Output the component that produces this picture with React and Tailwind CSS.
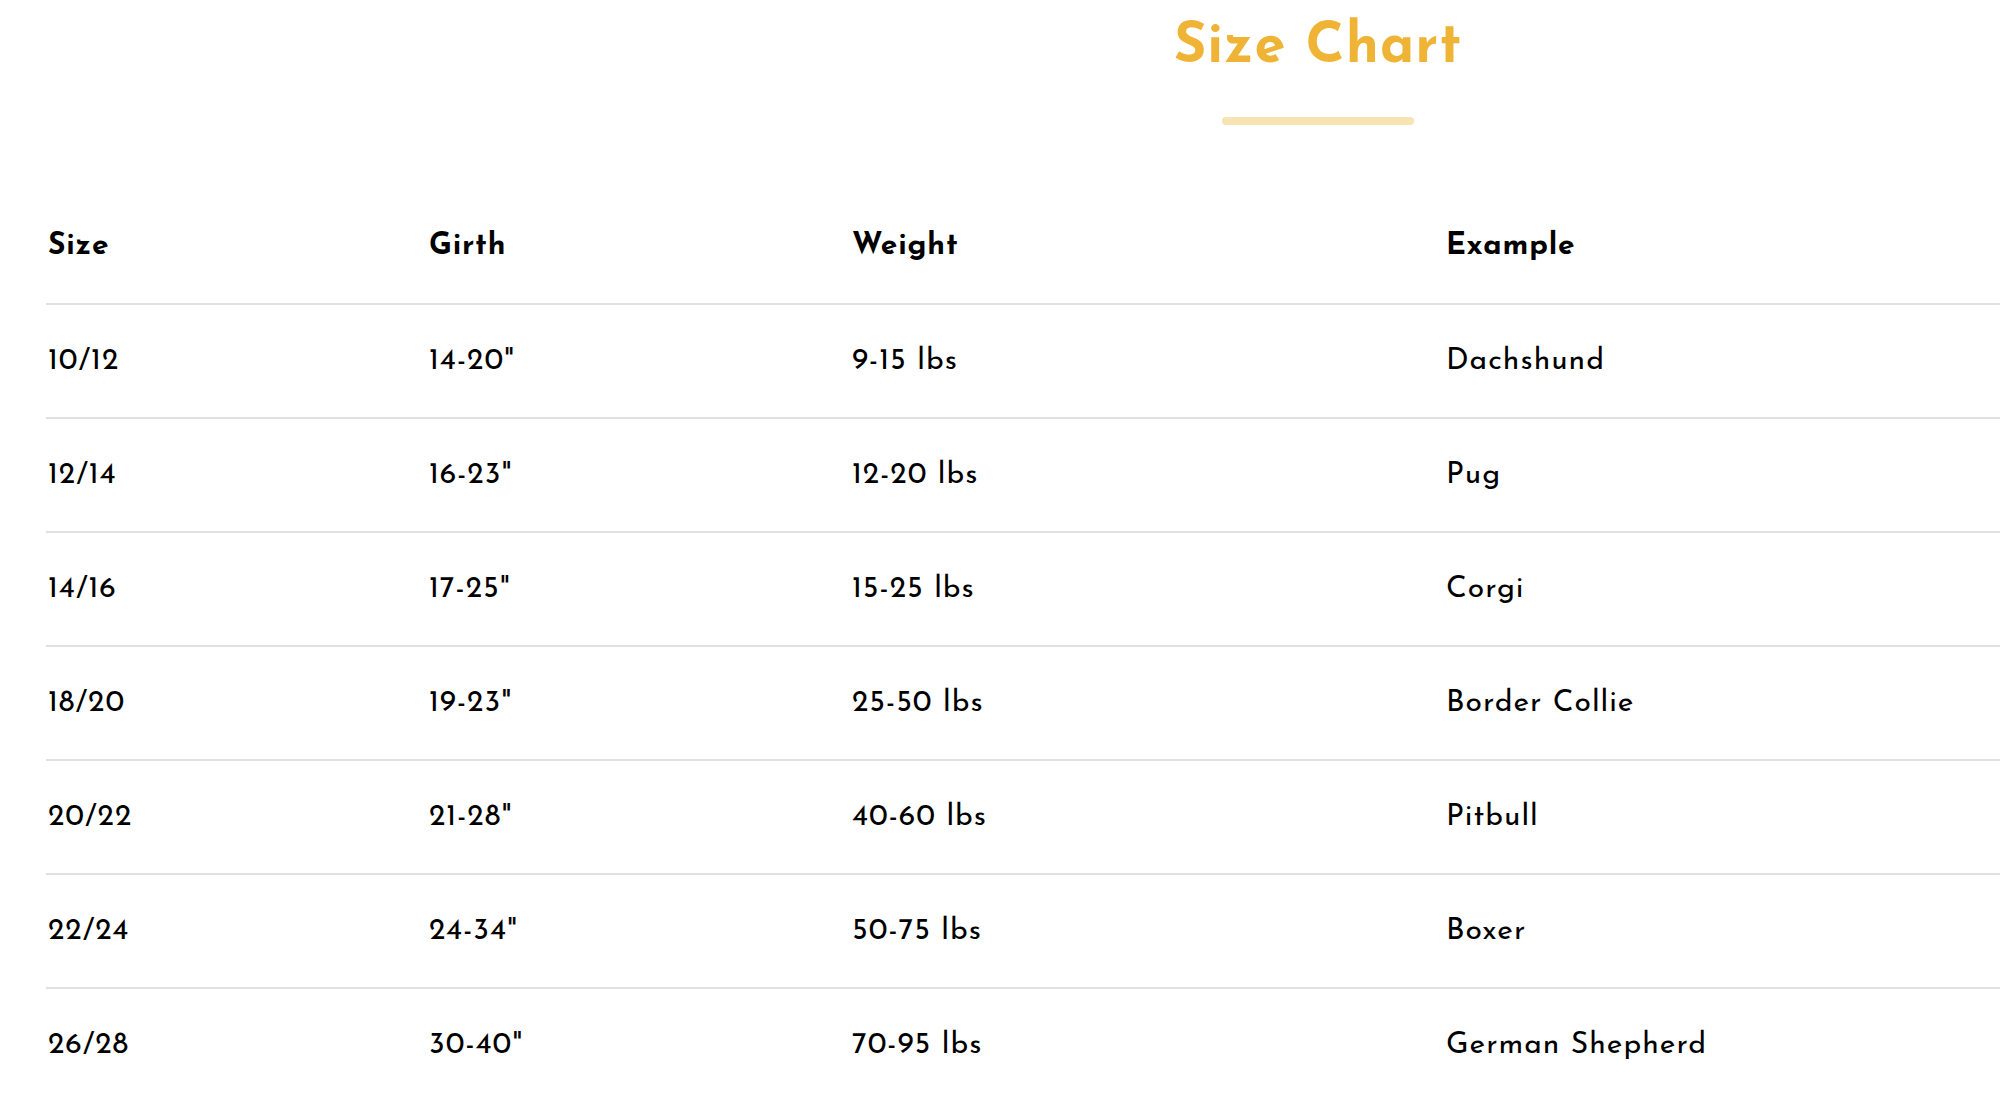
const rows = [
  ['10/12', '14-20"', '9-15 lbs', 'Dachshund'],
  ['12/14', '16-23"', '12-20 lbs', 'Pug'],
  ['14/16', '17-25"', '15-25 lbs', 'Corgi'],
  ['18/20', '19-23"', '25-50 lbs', 'Border Collie'],
  ['20/22', '21-28"', '40-60 lbs', 'Pitbull'],
  ['22/24', '24-34"', '50-75 lbs', 'Boxer'],
  ['26/28', '30-40"', '70-95 lbs', 'German Shepherd'],
];

const cols = ['w-[381px]', 'w-[423px]', 'w-[594px]', 'flex-1'];

function Row({ cells, head }) {
  return (
    <div className={`flex items-center h-[114px] ${head ? '' : 'border-t-2 border-[#e0e0e0]'}`}>
      {cells.map((c, i) => (
        <div
          key={i}
          className={`${cols[i]} pl-[2px] text-[30px] text-black ${head ? 'font-bold tracking-[0.8px]' : 'font-normal tracking-[1px]'}`}
        >
          {c}
        </div>
      ))}
    </div>
  );
}

export default function App() {
  return (
    <div className="w-[2000px] h-[1104px] overflow-hidden bg-white" style={{ fontFamily: '"Josefin Sans", Lato, "Open Sans", sans-serif' }}>
      <div className="ml-[46px] w-[2544px]">
        <div className="flex flex-col items-center h-[189px] pt-[11px]">
          <h1 className="text-[56px] font-bold leading-[74px] tracking-[1px] text-[#efb435]">Size Chart</h1>
          <div className="mt-[32px] w-[192px] h-[8px] rounded-full bg-[#f8e4b2]" />
        </div>
        <Row cells={['Size', 'Girth', 'Weight', 'Example']} head />
        {rows.map((r) => (
          <Row key={r[0]} cells={r} />
        ))}
      </div>
    </div>
  );
}
